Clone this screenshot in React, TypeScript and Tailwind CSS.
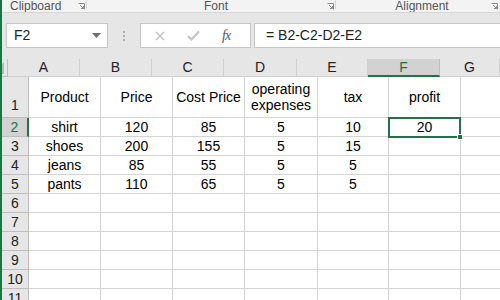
import React from 'react';

const COLS = [
  { key: 'A', w: 'w-[72px]' },
  { key: 'B', w: 'w-[72px]' },
  { key: 'C', w: 'w-[72px]' },
  { key: 'D', w: 'w-[73px]' },
  { key: 'E', w: 'w-[71px]' },
  { key: 'F', w: 'w-[72px]' },
  { key: 'G', w: 'w-[60px]' },
];

const ROWS: string[][] = [
  ['Product', 'Price', 'Cost Price', 'operating\nexpenses', 'tax', 'profit', ''],
  ['shirt', '120', '85', '5', '10', '20', ''],
  ['shoes', '200', '155', '5', '15', '', ''],
  ['jeans', '85', '55', '5', '5', '', ''],
  ['pants', '110', '65', '5', '5', '', ''],
  ['', '', '', '', '', '', ''],
  ['', '', '', '', '', '', ''],
  ['', '', '', '', '', '', ''],
  ['', '', '', '', '', '', ''],
  ['', '', '', '', '', '', ''],
  ['', '', '', '', '', '', ''],
];

function Launcher() {
  return (
    <svg width="7" height="7" viewBox="0 0 7 7" className="text-[#8a8a8a]">
      <path d="M0.5 0.5H6.5V6.5" fill="none" stroke="currentColor" />
      <path d="M2 2L5.5 5.5M3 5.5H5.5V3" fill="none" stroke="currentColor" />
    </svg>
  );
}

function RibbonLabels() {
  return (
    <div className="h-[13px] bg-[#f3f3f3] border-b border-[#d6d6d6] flex overflow-hidden text-[12px] leading-[12px] text-[#555]">
      <div className="w-[84px] relative flex">
        <span className="pl-[8px]">Clipboard</span>
        <div className="absolute left-[76px] top-[3px]"><Launcher /></div>
      </div>
      <div className="w-px h-[9px] bg-[#d6d6d6]" />
      <div className="w-[248px] relative flex justify-center">
        <span className="pl-[10px]">Font</span>
        <div className="absolute left-[240px] top-[3px]"><Launcher /></div>
      </div>
      <div className="w-px h-[9px] bg-[#d6d6d6]" />
      <div className="flex-1 relative flex justify-center">
        <span className="pl-[8px]">Alignment</span>
        <div className="absolute left-[155px] top-[3px]"><Launcher /></div>
      </div>
    </div>
  );
}

function FormulaBar() {
  return (
    <div className="h-[46px] bg-[#e6e6e6] pt-[10px] relative">
      <div className="flex items-start h-[25px]">
        <div className="ml-[4px] w-[102px] h-[25px] bg-white border border-[#c6c6c6] flex items-center justify-between pl-[7px] pr-[6px]">
          <span className="text-[14px] text-[#222]">F2</span>
          <svg width="9" height="5" viewBox="0 0 9 5"><path d="M0 0H9L4.5 5Z" fill="#6e6e6e" /></svg>
        </div>
        <div className="w-[32px] h-[25px] flex flex-col items-center justify-center gap-[2px]">
          <div className="w-[2px] h-[2px] bg-[#b0b0b0]" />
          <div className="w-[2px] h-[2px] bg-[#b0b0b0]" />
          <div className="w-[2px] h-[2px] bg-[#b0b0b0]" />
        </div>
        <div className="w-[111px] h-[25px] bg-white border border-[#c6c6c6] flex items-center">
          <svg width="10" height="10" viewBox="0 0 10 10" className="ml-[14px]">
            <path d="M1 1L9 9M9 1L1 9" stroke="#c2c2c2" strokeWidth="1.4" />
          </svg>
          <svg width="13" height="11" viewBox="0 0 13 11" className="ml-[22px]">
            <path d="M1 6L4.5 9.5L12 1.5" fill="none" stroke="#c2c2c2" strokeWidth="2" />
          </svg>
          <span className="ml-[22px] text-[14px] italic text-[#555] font-['Liberation_Serif',serif] tracking-[-1px]">fx</span>
        </div>
        <div className="ml-[3px] flex-1 h-[25px] bg-white border border-[#c6c6c6] border-r-0 flex items-center pl-[11px]">
          <span className="text-[14px] text-[#222]">= B2-C2-D2-E2</span>
        </div>
      </div>
    </div>
  );
}

function HeaderRow() {
  return (
    <div className="flex h-[18px]">
      <div className="w-[27px] h-[18px] bg-[#e6e6e6] border-r border-b border-[#bdbdbd] relative">
        <svg width="12" height="12" viewBox="0 0 12 12" className="absolute right-[3px] bottom-[2px]">
          <path d="M12 0V12H0Z" fill="#b8b8b8" />
        </svg>
      </div>
      {COLS.map((c) => {
        const active = c.key === 'F';
        return (
          <div
            key={c.key}
            className={
              active
                ? `${c.w} shrink-0 h-[18px] bg-[#d2d2d2] border-r border-[#bdbdbd] border-b-2 border-b-[#217346] flex items-center justify-center text-[14px] text-[#217346]`
                : `${c.w} shrink-0 h-[18px] bg-[#e6e6e6] border-r border-b border-[#d0d0d0] flex items-center justify-center text-[14px] text-[#222]`
            }
          >
            {c.key}
          </div>
        );
      })}
    </div>
  );
}

function GridRow({ cells, index }: { cells: string[]; index: number }) {
  const n = index + 1;
  const tall = n === 1;
  const active = n === 2;
  const h = tall ? 'h-[41px]' : 'h-[19px]';
  return (
    <div className={`flex ${h}`}>
      <div
        className={
          active
            ? `w-[27px] shrink-0 ${h} bg-[#d2d2d2] border-b border-[#bdbdbd] border-r-2 border-r-[#217346] flex items-center justify-center text-[14px] text-[#217346]`
            : `w-[27px] shrink-0 ${h} bg-[#e6e6e6] border-r border-b border-[#bdbdbd] flex ${tall ? 'items-end pb-[1px]' : 'items-center'} justify-center text-[14px] text-[#222]`
        }
      >
        {n}
      </div>
      {COLS.map((c, ci) => {
        const selected = n === 2 && c.key === 'F';
        return (
          <div
            key={c.key}
            className={`${c.w} shrink-0 ${h} bg-white border-r border-b border-[#d4d4d4] relative flex items-center justify-center text-center whitespace-pre-line text-[14px] leading-[16px] text-black`}
          >
            {cells[ci]}
            {selected && (
              <div className="absolute z-10 -left-[1px] -top-[1px] w-[73px] h-[21px] border-2 border-[#217346]">
                <div className="absolute -right-[4px] -bottom-[4px] w-[6px] h-[6px] bg-[#217346] border border-white" />
              </div>
            )}
          </div>
        );
      })}
    </div>
  );
}

export default function App() {
  return (
    <div className="w-[500px] h-[300px] overflow-hidden bg-[#e6e6e6] border-l-2 border-[#217346] font-['Liberation_Sans',Arial,sans-serif]">
      <RibbonLabels />
      <FormulaBar />
      <HeaderRow />
      {ROWS.map((r, i) => (
        <GridRow key={i} cells={r} index={i} />
      ))}
    </div>
  );
}
